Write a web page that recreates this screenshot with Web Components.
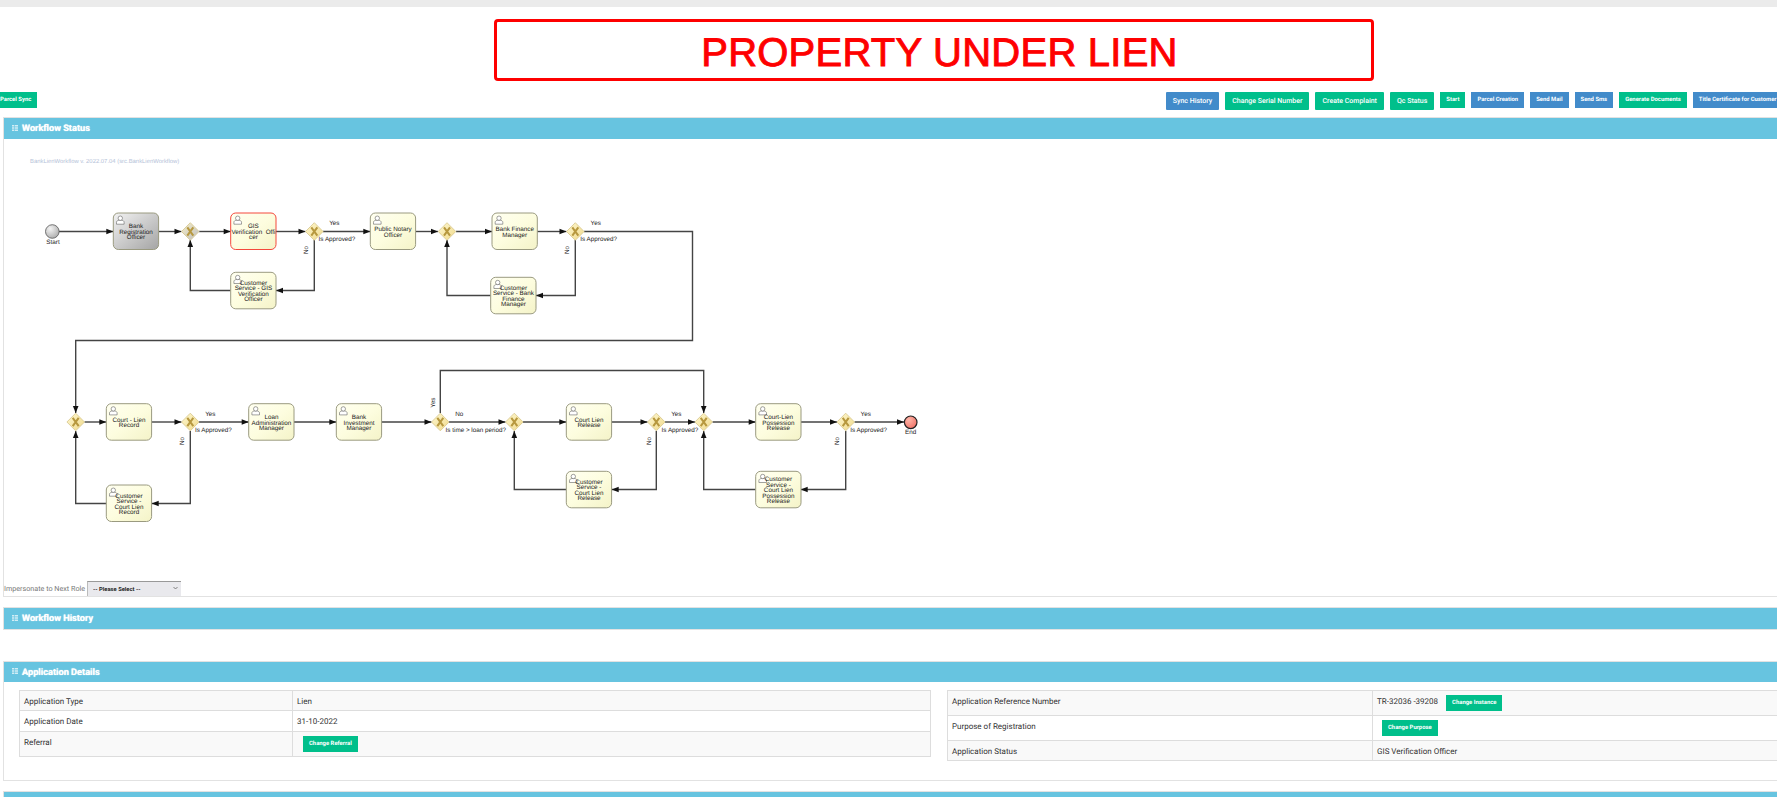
<!DOCTYPE html>
<html>
<head>
<meta charset="utf-8">
<title>Workflow</title>
<style>
    html, body { margin: 0; padding: 0; background: #fff; overflow: hidden; height: 797px; }
    body { width: 1868px; font-family: Roboto, "Liberation Sans", sans-serif; color: #333; text-rendering: geometricPrecision; }
    .top-strip { height: 7px; background: #ebebeb; }
    .toolbar { display: flex; justify-content: space-between; align-items: flex-start; height: 18px; margin: 11px 0 7px; }
    .toolbar-left { margin-left: -6px; }
    .toolbar-right { display: flex; align-items: flex-start; gap: 6px; padding-right: 85.5px; }
    .details { display: grid; grid-template-columns: 912px 912px; gap: 16px; min-height: 70px; }
    .value-inline { margin-right: 8px; }
</style>
<script>
const bannerTemplate = document.createElement("template")
bannerTemplate.innerHTML = `
<style>
    :host { display: block; width: 880px; margin: 12px auto 0; box-sizing: border-box; height: 62px; padding-left: 11px;
        border: 3px solid #fe0000; border-radius: 4px; color: #fe0000; text-align: center; letter-spacing: .24px;
        font: 40px/62px "Liberation Sans", Arial, sans-serif; -webkit-text-stroke: .9px #fe0000; }
</style>
<slot></slot>
`
class LienBanner extends HTMLElement {
    constructor() {
        super()
        this.attachShadow({mode: 'open'}).appendChild(bannerTemplate.content.cloneNode(true))
    }
}
customElements.define("lien-banner", LienBanner)

const buttonTemplate = document.createElement("template")
buttonTemplate.innerHTML = `
<style>
    :host { display: inline-block; box-sizing: border-box; color: #fff; white-space: nowrap; background: #00bf8b;
        height: 16px; padding: 0 6px; font: 700 5.9px/17px Roboto, sans-serif; flex: none; }
    :host([color="blue"]) { background: #428bca; }
    :host([size="big"]) { height: 18px; padding: 0 7px; font: 500 7px/18px Roboto, sans-serif; border-radius: 1px; }
</style>
<slot></slot>
`
class ActionButton extends HTMLElement {
    constructor() {
        super()
        this.attachShadow({mode: 'open'}).appendChild(buttonTemplate.content.cloneNode(true))
    }
}
customElements.define("action-button", ActionButton)

const panelTemplate = document.createElement("template")
panelTemplate.innerHTML = `
<style>
    :host { display: block; margin: 0 4px 10px 3px; border: 1px solid #e2e2e2; background: #fff; }
    header { display: flex; align-items: center; gap: 4px; height: var(--head, 21px); padding-left: 8px;
        background: #67c4e0; color: #fff; font: 700 9.2px Roboto, sans-serif; text-shadow: 0 0 1px #fff; }
    svg { width: 6px; height: 6px; opacity: .7; margin-top: -2px; }
    span { margin-top: var(--shift, -1px); }
    main { padding: var(--pad, 0); }
</style>
<header>
    <svg viewBox="0 0 6 6"><path fill="#fff" d="M0 0h2v1.6H0zM0 2.2h2v1.6H0zM0 4.4h2V6H0zM2.6 0H6v1.6H2.6zM2.6 2.2H6v1.6H2.6zM2.6 4.4H6V6H2.6z"/></svg>
    <span id="title"></span>
</header>
<main><slot></slot></main>
`
class PanelBox extends HTMLElement {
    constructor() {
        super()
        this.attachShadow({mode: 'open'}).appendChild(panelTemplate.content.cloneNode(true))
    }

    connectedCallback() {
        this.shadowRoot.querySelector("#title").textContent = this.getAttribute("title-text")
    }
}
customElements.define("panel-box", PanelBox)

const rowTemplate = document.createElement("template")
rowTemplate.innerHTML = `
<style>
    :host { display: grid; grid-template-columns: var(--label-w) 1fr; border-bottom: 1px solid #ddd;
        font: 8px/14px Roboto, sans-serif; color: #333; }
    :host([shade]) { background: #f9f9f9; }
    div { padding: 4px 4px var(--pad-b, 1px); }
    .label { border-right: 1px solid #ddd; }
    slot { display: flex; align-items: flex-start; }
</style>
<div class="label"></div>
<div><slot></slot></div>
`
class DetailRow extends HTMLElement {
    constructor() {
        super()
        this.attachShadow({mode: 'open'}).appendChild(rowTemplate.content.cloneNode(true))
    }

    connectedCallback() {
        this.shadowRoot.querySelector(".label").textContent = this.getAttribute("label")
    }
}
customElements.define("detail-row", DetailRow)

const tableTemplate = document.createElement("template")
tableTemplate.innerHTML = `
<style>
    :host { display: block; align-self: start; border: 1px solid #ddd; border-bottom: 0; }
</style>
<slot></slot>
`
class DetailTable extends HTMLElement {
    constructor() {
        super()
        this.attachShadow({mode: 'open'}).appendChild(tableTemplate.content.cloneNode(true))
    }
}
customElements.define("detail-table", DetailTable)

const selectTemplate = document.createElement("template")
selectTemplate.innerHTML = `
<style>
    :host { display: flex; align-items: center; gap: 2px; height: 15px; color: #777; font: 7.2px Roboto, sans-serif; }
    .box { position: relative; display: block; width: 94px; height: 15px; }
    select { appearance: none; display: block; box-sizing: border-box; width: 94px; height: 15px; margin: 0; padding: 0 0 0 5px; border: 0; border-top: 1px solid #999; border-left: 1px solid #bbb;
        border-radius: 0; background: #e9e9ed; color: #222; font: 700 5.8px Roboto, sans-serif; }
    svg { position: absolute; right: 3px; top: 5px; width: 5px; height: 4px; pointer-events: none; }
</style>
<label>Impersonate to Next Role</label>
<span class="box">
    <select><option>-- Please Select --</option></select>
    <svg viewBox="0 0 5 4"><path d="M.5 1l2 2 2-2" fill="none" stroke="#666" stroke-width=".8"/></svg>
</span>
`
class RoleSelect extends HTMLElement {
    constructor() {
        super()
        this.attachShadow({mode: 'open'}).appendChild(selectTemplate.content.cloneNode(true))
    }
}
customElements.define("role-select", RoleSelect)

// diagram coordinates are page coordinates, the viewBox below starts where the panel body starts
const tasks = [
    [113.3, 213, ["Bank", "Registration", "Officer"], "done"],
    [230.7, 213, ["GIS", "Verification  Offi", "cer"], "active"],
    [370.3, 213, ["Public Notary", "Officer"]],
    [492, 213, ["Bank Finance", "Manager"]],
    [230.7, 272.3, ["Customer", "Service - GIS", "Verification", "Officer"]],
    [490.7, 277.3, ["Customer", "Service - Bank", "Finance", "Manager"]],
    [106.3, 403.7, ["Court - Lien", "Record"]],
    [248.7, 403.7, ["Loan", "Administration", "Manager"]],
    [336.3, 403.7, ["Bank", "Investment", "Manager"]],
    [566.3, 403.7, ["Court Lien", "Release"]],
    [755.7, 403.7, ["Court-Lien", "Possession", "Release"]],
    [106.3, 485, ["Customer", "Service -", "Court Lien", "Record"]],
    [566.3, 471.3, ["Customer", "Service -", "Court Lien", "Release"]],
    [755.7, 471.3, ["Customer", "Service -", "Court Lien", "Possession", "Release"]]
]
const gateways = [[190.3, 231.5, "gwDone"], [314.3, 231.5], [447, 231.5], [575.3, 231.5], [75.7, 422], [190.3, 422], [440.3, 422], [514.3, 422], [656.3, 422], [703.7, 422], [845.7, 422]]
const flows = [
    [[59, 231.5], [113.3, 231.5]], [[158.7, 231.5], [181.5, 231.5]], [[199, 231.5], [230.7, 231.5]],
    [[276, 231.5], [305.5, 231.5]], [[323, 231.5], [370.3, 231.5]], [[415.7, 231.5], [438, 231.5]],
    [[456, 231.5], [492, 231.5]], [[537, 231.5], [566.5, 231.5]],
    [[584, 231.5], [692.5, 231.5], [692.5, 340.5], [75.7, 340.5], [75.7, 413]],
    [[314.3, 240], [314.3, 290.5], [276, 290.5]], [[230.7, 290.5], [190.3, 290.5], [190.3, 240]],
    [[575.3, 240], [575.3, 295.5], [536, 295.5]], [[490.7, 295.5], [447, 295.5], [447, 240]],
    [[84.5, 422], [106.3, 422]], [[151.7, 422], [181.5, 422]], [[199, 422], [248.7, 422]],
    [[294, 422], [336.3, 422]], [[381.7, 422], [431.5, 422]],
    [[190.3, 431], [190.3, 503.5], [151.7, 503.5]], [[106.3, 503.5], [75.7, 503.5], [75.7, 431]],
    [[449, 422], [505.5, 422]], [[440.3, 413], [440.3, 370.5], [703.7, 370.5], [703.7, 413]],
    [[523, 422], [566.3, 422]], [[611.7, 422], [647.5, 422]], [[665, 422], [695, 422]],
    [[712.5, 422], [755.7, 422]], [[800.7, 422], [837, 422]], [[854.5, 422], [904, 422]],
    [[656.3, 431], [656.3, 489.5], [611.7, 489.5]], [[566.3, 489.5], [514.3, 489.5], [514.3, 431]],
    [[845.7, 431], [845.7, 489.5], [800.7, 489.5]], [[755.7, 489.5], [703.7, 489.5], [703.7, 431]]
]
const labels = [
    [53, 244, "Start"], [910.7, 434, "End"],
    [334.3, 225, "Yes"], [337, 241, "Is Approved?"], [595.7, 225, "Yes"], [598.7, 241, "Is Approved?"],
    [210.3, 416, "Yes"], [213.3, 432, "Is Approved?"], [459.3, 416, "No"], [475.8, 432, "Is time > loan period?"],
    [676.3, 416, "Yes"], [680, 432, "Is Approved?"], [865.7, 416, "Yes"], [868.7, 432, "Is Approved?"]
]
const sideLabels = [[306.3, 250, "No"], [567.3, 250, "No"], [182.3, 441, "No"], [432.7, 402.7, "Yes"], [648.7, 441, "No"], [837.3, 441, "No"]]

class BpmnDiagram extends HTMLElement {
    constructor() {
        super()
        this.attachShadow({mode: 'open'})
        this.shadowRoot.innerHTML = `
<style>
    :host { display: block; height: 442px; }
    svg { display: block; }
    text { font-family: "Liberation Sans", Arial, sans-serif; font-size: 6.3px; fill: #222; text-anchor: middle; }
    .title { font-size: 5.9px; fill: #b4c2d8; text-anchor: start; }
</style>
<svg width="1000" height="442" viewBox="4 139 1000 442">
    <defs>
        <linearGradient id="taskFill" x1="0" y1="0" x2="1" y2="1"><stop offset="0" stop-color="#fffff0"/><stop offset=".5" stop-color="#fdfddf"/><stop offset="1" stop-color="#f4f3c8"/></linearGradient>
        <linearGradient id="doneFill" x1="0" y1="0" x2="1" y2="1"><stop offset="0" stop-color="#f2f2f2"/><stop offset="1" stop-color="#a4a4a4"/></linearGradient>
        <linearGradient id="gwFill" x1="0" y1="0" x2="1" y2="1"><stop offset="0" stop-color="#fff8cf"/><stop offset="1" stop-color="#efd98c"/></linearGradient>
        <linearGradient id="gwDone" x1="0" y1="0" x2="1" y2="1"><stop offset="0" stop-color="#f6eec8"/><stop offset="1" stop-color="#bdbdbd"/></linearGradient>
        <radialGradient id="startFill" cx=".35" cy=".3" r=".8"><stop offset="0" stop-color="#f4f4f4"/><stop offset="1" stop-color="#a8a8a8"/></radialGradient>
        <radialGradient id="endFill" cx=".35" cy=".3" r=".8"><stop offset="0" stop-color="#ffb5a8"/><stop offset="1" stop-color="#ef6f64"/></radialGradient>
    </defs>
    <text class="title" x="30" y="163">BankLienWorkflow v. 2022.07.04 (src.BankLienWorkflow)</text>
    ${flows.map(f => this.flow(f)).join("")}
    <circle cx="52.3" cy="231.5" r="6.8" fill="url(#startFill)" stroke="#555" stroke-width=".8"/>
    <circle cx="910.7" cy="422.3" r="6.3" fill="url(#endFill)" stroke="#222" stroke-width="1.2"/>
    ${tasks.map(t => this.task(t)).join("")}
    ${gateways.map(g => this.gateway(g)).join("")}
    ${labels.map(l => `<text x="${l[0]}" y="${l[1]}">${l[2].replace(">", "&gt;")}</text>`).join("")}
    ${sideLabels.map(l => `<text transform="translate(${l[0] + 2} ${l[1]}) rotate(-90)">${l[2]}</text>`).join("")}
</svg>`
    }

    flow(points) {
        let last = points[points.length - 1]
        let prev = points[points.length - 2]
        let len = Math.hypot(last[0] - prev[0], last[1] - prev[1])
        let dx = (last[0] - prev[0]) / len
        let dy = (last[1] - prev[1]) / len
        let bx = last[0] - dx * 7
        let by = last[1] - dy * 7
        let head = `${last[0]},${last[1]} ${bx - dy * 2.8},${by + dx * 2.8} ${bx + dy * 2.8},${by - dx * 2.8}`
        return `<polyline points="${points.join(" ")}" fill="none" stroke="#444" stroke-width="1.4"/><polygon points="${head}" fill="#111"/>`
    }

    task(t) {
        let [x, y, lines, state] = t
        let fill = state == "done" ? "url(#doneFill)" : "url(#taskFill)"
        let stroke = state == "active" ? "#f4483c" : "#9a9a80"
        let mid = y + 18.5
        let text = lines.map((line, i) => `<text x="${x + 22.7}" y="${mid + (i - (lines.length - 1) / 2) * 5.4 + 2.3}" xml:space="preserve">${line}</text>`).join("")
        return `<rect x="${x}" y="${y}" width="45.3" height="36.5" rx="5" fill="${fill}" stroke="${stroke}" stroke-width="1"/>
        <g transform="translate(${x + 2.8} ${y + 2.6})" fill="#fff" stroke="#555" stroke-width=".55">
            <path d="M.4 8.6V6.6c0-1.2 1.3-1.8 2.5-2h2.6c1.2.2 2.5.8 2.5 2v2z"/>
            <circle cx="4.2" cy="2.6" r="2.2"/>
        </g>${text}`
    }

    gateway(g) {
        let [x, y, fill] = g
        let r = 8.8
        return `<polygon points="${x},${y - r} ${x + r},${y} ${x},${y + r} ${x - r},${y}" fill="url(#${fill || "gwFill"})" stroke="#d6c58a" stroke-width=".8"/>
        <path d="M${x - 3} ${y - 4.2}L${x + 3} ${y + 4.2}M${x + 3} ${y - 4.2}L${x - 3} ${y + 4.2}" stroke="#b7983f" stroke-width="2" fill="none"/>`
    }
}
customElements.define("bpmn-diagram", BpmnDiagram)
</script>
</head>
<body>
    <div class="top-strip"></div>
    <lien-banner>PROPERTY UNDER LIEN</lien-banner>
    <div class="toolbar">
        <action-button class="toolbar-left">Parcel Sync</action-button>
        <div class="toolbar-right">
            <action-button size="big" color="blue">Sync History</action-button>
            <action-button size="big">Change Serial Number</action-button>
            <action-button size="big">Create Complaint</action-button>
            <action-button size="big">Qc Status</action-button>
            <action-button>Start</action-button>
            <action-button color="blue">Parcel Creation</action-button>
            <action-button color="blue">Send Mail</action-button>
            <action-button color="blue">Send Sms</action-button>
            <action-button>Generate Documents</action-button>
            <action-button color="blue">Title Certificate for Customer</action-button>
        </div>
    </div>
    <panel-box title-text="Workflow Status">
        <bpmn-diagram></bpmn-diagram>
        <role-select></role-select>
    </panel-box>
    <panel-box title-text="Workflow History" style="margin-bottom: 31px"></panel-box>
    <panel-box title-text="Application Details" style="--head: 20px; --shift: 0px; --pad: 8px 15px 19px; margin-bottom: 10px">
        <div class="details">
            <detail-table style="--label-w: 273px">
                <detail-row label="Application Type" shade>Lien</detail-row>
                <detail-row label="Application Date" style="--pad-b: 2px">31-10-2022</detail-row>
                <detail-row label="Referral" shade style="--pad-b: 2px"><action-button style="margin: 0 0 2px 6px">Change Referral</action-button></detail-row>
            </detail-table>
            <detail-table style="--label-w: 425px">
                <detail-row label="Application Reference Number" shade style="--pad-b: 2px"><span class="value-inline">TR-32036 -39208</span><action-button style="margin: 0 0 2px">Change Instance</action-button></detail-row>
                <detail-row label="Purpose of Registration" style="--pad-b: 2px"><action-button style="margin: 0 0 2px 5px">Change Purpose</action-button></detail-row>
                <detail-row label="Application Status" shade>GIS Verification Officer</detail-row>
            </detail-table>
        </div>
    </panel-box>
    <panel-box></panel-box>
</body>
</html>
